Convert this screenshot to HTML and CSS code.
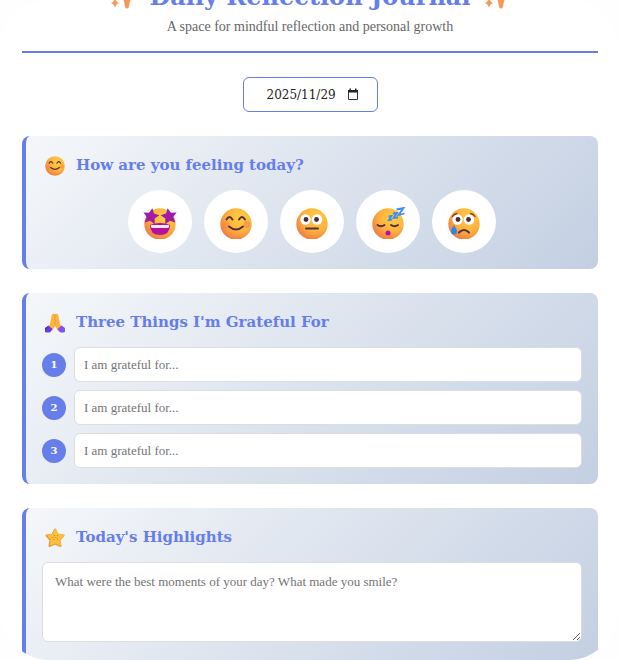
FILE: index.html
```html
<!DOCTYPE html>
<html lang="en">
<head>
    <meta charset="utf-8">
    <meta name="viewport" content="width=device-width, initial-scale=1.0">
    <title>Daily Reflection Journal</title>
    <link rel="stylesheet" href="styles.css">
</head>
<body>
    <main class="journal">
        <header class="header">
            <h1>
                <svg class="sparkle" viewBox="0 0 28 28" aria-hidden="true">
                    <defs>
                        <radialGradient id="skin" cx="0.65" cy="0.3" r="0.8">
                            <stop offset="0" stop-color="#ffcf3f"/>
                            <stop offset="0.55" stop-color="#fdb03f"/>
                            <stop offset="0.85" stop-color="#f2873f"/>
                            <stop offset="1" stop-color="#e8706a"/>
                        </radialGradient>
                        <g id="face">
                            <circle cx="18" cy="17" r="15.7" fill="url(#skin)"/>
                        </g>
                        <g id="eyes">
                            <circle cx="11.5" cy="12.5" r="5.2" fill="#fff"/>
                            <circle cx="23" cy="12.5" r="5.2" fill="#fff"/>
                            <circle cx="12" cy="12.5" r="2.4" fill="#4b2b3b"/>
                            <circle cx="22.5" cy="12.5" r="2.4" fill="#4b2b3b"/>
                        </g>
                        <g id="smile">
                            <use href="#face"/>
                            <circle cx="8" cy="18" r="3.5" fill="#f5764f" opacity="0.4"/>
                            <circle cx="29" cy="17.5" r="3.5" fill="#f5764f" opacity="0.45"/>
                            <path d="M8.500 12.500q3-5 6 0M21 12.500q3-5 6 0M11 19.500q7 6 14 0" fill="none" stroke="#50303c" stroke-width="1.9" stroke-linecap="round"/>
                        </g>
                        <path id="star" d="M0-6 1.900-2.200 6.200-1.700 3.100 1.400 3.900 5.800 0 3.700-3.900 5.800-3.100 1.400-6.200-1.700-1.900-2.200z"/>
                        <g id="sparkles" fill="#f79a58">
                            <path d="M18 1q2 9 8 11-5 2-6 12-2 3-4 0-1-10-6-12 6-2 8-11z"/>
                            <path d="M6 15q1 4 4 5-3 1-4 5-1-4-4-5 3-1 4-5zM6 2q1 3 4 4-3 1-4 4-1-3-4-4 3-1 4-4z"/>
                        </g>
                    </defs>
                    <use href="#sparkles"/>
                </svg>
                Daily Reflection Journal
                <svg class="sparkle" viewBox="0 0 28 28" aria-hidden="true"><use href="#sparkles"/></svg>
            </h1>
            <p>A space for mindful reflection and personal growth</p>
        </header>

        <div class="date">
            <input type="text" id="date" value="2025/11/29" aria-label="Date">
            <button type="button" aria-label="Choose date">
                <svg viewBox="0 0 12 13" aria-hidden="true">
                    <path d="M1.500 2.500h9v9h-9z" fill="none" stroke="#333"/>
                    <path d="M1 2h10v2.500H1zM2.500 0.500h1.500V2H2.500zM8 0.500h1.500V2H8z" fill="#222"/>
                </svg>
            </button>
        </div>

        <section class="card">
            <h2>
                <svg class="icon" viewBox="2 1 32 32" aria-hidden="true"><use href="#smile"/></svg>
                How are you feeling today?
            </h2>
            <div class="moods">
                <button type="button" aria-label="Amazing">
                    <svg viewBox="0 0 36 32" aria-hidden="true">
                        <use href="#face"/>
                        <path d="M8 18q10-4 20 0 0 10-10 10T8 18z" fill="#b5109c"/>
                        <path d="M9 18h18v1.500q0 1.500-1.500 1.500h-15Q9 21 9 19.500z" fill="#f3e9f5"/>
                        <use href="#star" transform="translate(9 9) rotate(10) scale(1.3)" fill="#a11aa8"/>
                        <use href="#star" transform="translate(27 9) rotate(-10) scale(1.3)" fill="#a11aa8"/>
                    </svg>
                </button>
                <button type="button" aria-label="Happy">
                    <svg viewBox="0 0 36 32" aria-hidden="true"><use href="#smile"/></svg>
                </button>
                <button type="button" aria-label="Neutral">
                    <svg viewBox="0 0 36 32" aria-hidden="true">
                        <use href="#face"/>
                        <use href="#eyes"/>
                        <path d="M12 21.500h12" stroke="#50303c" stroke-width="2" stroke-linecap="round"/>
                    </svg>
                </button>
                <button type="button" aria-label="Tired">
                    <svg viewBox="0 0 36 32" aria-hidden="true">
                        <use href="#face"/>
                        <path d="M7.500 18q3.500 2.500 7 0M21 18q3.500 2.500 7 0" fill="none" stroke="#50303c" stroke-width="1.9" stroke-linecap="round"/>
                        <circle cx="18" cy="26" r="2.500" fill="#c30aa5"/>
                        <path d="M26.500 2.500 33.500 1l-5 7 6-1.500M23 6.500l4-.5-3.500 5 4.500-.5M18.500 9.500l3-.5-2.500 4 3-.5" fill="none" stroke="#3f8df0" stroke-width="1.8"/>
                    </svg>
                </button>
                <button type="button" aria-label="Sad">
                    <svg viewBox="0 0 36 32" aria-hidden="true">
                        <use href="#face"/>
                        <use href="#eyes"/>
                        <path d="M6.500 9.500q1.500-2.500 4.500-3M29 9.500q-1.500-2.500-4.500-3" fill="none" stroke="#7a3f35" stroke-width="1.4" stroke-linecap="round"/>
                        <path d="M13 25.500q5-5 10 0" fill="none" stroke="#50303c" stroke-width="2" stroke-linecap="round"/>
                        <path d="M8 18q3 4.500 3 6.500a3 3 0 0 1-6 0q0-2 3-6.500z" fill="#2f86ea"/>
                    </svg>
                </button>
            </div>
        </section>

        <section class="card">
            <h2>
                <svg class="icon" viewBox="0 0 20 20" aria-hidden="true">
                    <path d="M9.500 1Q7 0 6.500 3L5 11l-2 4 4 3 3-5 3 5 4-3-2-4-1.500-8Q13 0 10.500 1z" fill="#fdb53c"/>
                    <path d="M10 2v10" stroke="#e8923a" stroke-width="0.8"/>
                    <path d="M3.500 12.500 7.500 16 5.500 19Q3 20 0 19v-4z" fill="#6a3de0"/>
                    <path d="M16.500 12.500 12.500 16l2 3q2.500 1 5.500 0v-4z" fill="#8a50ee"/>
                    <path d="M0 15.500 3 13l-2 4z" fill="#3d2a80"/>
                </svg>
                Three Things I'm Grateful For
            </h2>
            <ol class="gratitude">
                <li>
                    <label for="grateful-1">1</label>
                    <input type="text" id="grateful-1" placeholder="I am grateful for...">
                </li>
                <li>
                    <label for="grateful-2">2</label>
                    <input type="text" id="grateful-2" placeholder="I am grateful for...">
                </li>
                <li>
                    <label for="grateful-3">3</label>
                    <input type="text" id="grateful-3" placeholder="I am grateful for...">
                </li>
            </ol>
        </section>

        <section class="card">
            <h2>
                <svg class="icon" viewBox="0 0 20 20" aria-hidden="true">
                    <path d="M10 1.500 12.500 6.500 18.500 7.500 14.500 12 15.500 18 10 15.500 4.500 18 5.500 12 1.500 7.500 7.500 6.500z" fill="#e79a3a" stroke="#e79a3a" stroke-width="2" stroke-linejoin="round"/>
                    <path d="M10.500 1.500 13 6.500 18.500 7.500 14.500 12 15.500 17 10.500 14.500 5.500 16.500 6.500 11.500 3 7.500 8 6.500z" fill="#fbbf3e" stroke="#fbbf3e" stroke-width="1.500" stroke-linejoin="round"/>
                    <path d="M9 7.500h1M12 7.500h1M7.500 9.500h1M10.500 9.500h1M8.500 11.500h1M12 11.500h1" stroke="#b87a2c" stroke-width="0.8"/>
                </svg>
                <label for="highlights">Today's Highlights</label>
            </h2>
            <textarea id="highlights" placeholder="What were the best moments of your day? What made you smile?"></textarea>
        </section>
    </main>
</body>
</html>
```
FILE: styles.css
```css
* {
    box-sizing: border-box;
}

body {
    margin: 0;
    background: #fefefe;
    font-family: Georgia, "DejaVu Serif", serif;
}

.journal {
    height: 100vh;
    padding: 0 20px 0 22px;
    overflow: hidden;
    border-radius: 50px;
    background: #fff;
}

.header {
    margin-top: -23px;
    margin-bottom: 24px;
    padding-bottom: 14px;
    border-bottom: 2px solid #667eea;
    text-align: center;
}

.header h1 {
    display: flex;
    justify-content: center;
    align-items: center;
    gap: 12px;
    margin: 0;
    color: #667eea;
    font-size: 24px;
    line-height: 40px;
    white-space: nowrap;
}

.sparkle {
    width: 28px;
    height: 28px;
}

.header p {
    margin: 0;
    color: #666;
    font-family: Georgia, "Liberation Serif", serif;
    font-size: 14px;
    line-height: 20px;
}

.date {
    display: flex;
    align-items: center;
    justify-content: flex-end;
    gap: 4px;
    width: 135px;
    height: 35px;
    margin: 0 auto 24px;
    padding-right: 18px;
    border: 1px solid #667eea;
    border-radius: 6px;
    background: #fff;
}

.date input {
    width: 76px;
    padding: 0;
    border: 0;
    outline: 0;
    background: none;
    color: #222;
    font-family: Georgia, "DejaVu Serif", serif;
    font-size: 12px;
}

.date button {
    display: flex;
    padding: 0;
    border: 0;
    background: none;
}

.date svg {
    width: 12px;
    height: 13px;
}

.card {
    margin-bottom: 24px;
    padding: 16px;
    border-left: 4px solid #667eea;
    border-radius: 8px;
    background: linear-gradient(135deg, #f5f7fa 0%, #c3cfe2 100%);
}

.card h2 {
    display: flex;
    align-items: center;
    gap: 8px;
    margin: 0 0 12px;
    color: #667eea;
    font-size: 15px;
    line-height: 26px;
}

.icon {
    width: 26px;
    height: 26px;
    padding: 4px 3px 2px;
}

.moods {
    display: flex;
    justify-content: center;
    gap: 12px;
}

.moods button {
    display: flex;
    align-items: center;
    justify-content: center;
    width: 64px;
    height: 63px;
    padding: 3px 0 0;
    border: 0;
    border-radius: 50%;
    background: #fff;
    cursor: pointer;
}

.moods svg {
    width: 36px;
    height: 32px;
}

.gratitude {
    display: flex;
    flex-direction: column;
    gap: 8px;
    margin: 0;
    padding: 0;
    list-style: none;
}

.gratitude li {
    display: flex;
    align-items: center;
    gap: 8px;
}

.gratitude label {
    width: 24px;
    height: 24px;
    border-radius: 50%;
    background: #667eea;
    color: #fff;
    font-size: 10px;
    font-weight: bold;
    line-height: 24px;
    text-align: center;
}

.gratitude input,
textarea {
    border: 1px solid #ddd;
    border-radius: 6px;
    outline: 0;
    background: #fff;
    color: #333;
    font-family: Georgia, "Liberation Serif", serif;
    font-size: 13px;
}

.gratitude input {
    flex: 1;
    min-width: 0;
    height: 35px;
    padding: 0 9px;
}

textarea {
    display: block;
    width: 100%;
    height: 80px;
    margin-bottom: 4px;
    padding: 9px 12px;
    line-height: 20px;
    resize: vertical;
}

::placeholder {
    color: #757575;
}
```
